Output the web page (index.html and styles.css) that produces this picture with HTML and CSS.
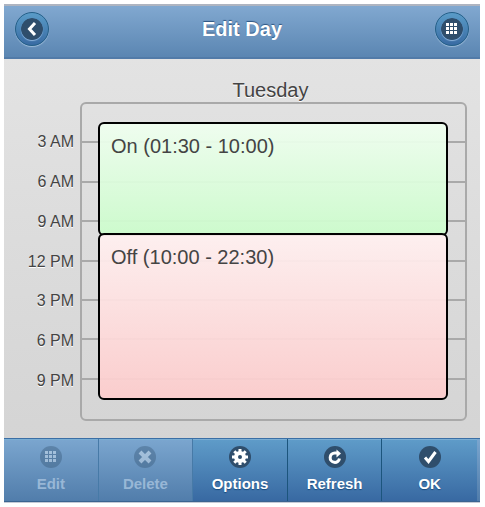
FILE: index.html
```html
<!DOCTYPE html>
<html lang="en">
<head>
<meta charset="utf-8">
<meta name="viewport" content="width=device-width, initial-scale=1">
<title>Edit Day</title>
<link rel="stylesheet" href="styles.css">
</head>
<body>
<div class="app">
  <header class="header">
    <button class="round-button" type="button" aria-label="Back">
      <svg class="icon" viewBox="0 0 22 22" aria-hidden="true"><circle class="disc" cx="11" cy="11" r="11"/><path class="stroke" d="M14 5 8.500 11l5.500 6"/></svg>
    </button>
    <h1 class="title">Edit Day</h1>
    <button class="round-button" type="button" aria-label="Menu">
      <svg class="icon" viewBox="0 0 22 22" aria-hidden="true"><circle class="disc" cx="11" cy="11" r="11"/><path class="fill" d="M5 5h3v3H5zM9 5h3v3H9zM13 5h3v3h-3zM5 9h3v3H5zM9 9h3v3H9zM13 9h3v3h-3zM5 13h3v3H5zM9 13h3v3H9zM13 13h3v3h-3z"/></svg>
    </button>
  </header>

  <main class="schedule">
    <h2 class="day">Tuesday</h2>
    <ol class="hours">
      <li>3 AM</li>
      <li>6 AM</li>
      <li>9 AM</li>
      <li>12 PM</li>
      <li>3 PM</li>
      <li>6 PM</li>
      <li>9 PM</li>
    </ol>
    <div class="timeline">
      <div class="lines" aria-hidden="true">
        <i></i><i></i><i></i><i></i><i></i><i></i><i></i><i></i>
      </div>
      <div class="event on" style="top: 6.25%; bottom: 58.333%">On (01:30 - 10:00)</div>
      <div class="event off" style="top: 41.667%; bottom: 6.25%">Off (10:00 - 22:30)</div>
    </div>
  </main>

  <footer class="toolbar">
    <button class="tool" type="button" disabled>
      <svg class="icon" viewBox="0 0 22 22" aria-hidden="true"><circle class="disc" cx="11" cy="11" r="11"/><path class="fill" d="M5 5h3v3H5zM9 5h3v3H9zM13 5h3v3h-3zM5 9h3v3H5zM9 9h3v3H9zM13 9h3v3h-3zM5 13h3v3H5zM9 13h3v3H9zM13 13h3v3h-3z"/></svg>
      Edit
    </button>
    <button class="tool" type="button" disabled>
      <svg class="icon" viewBox="0 0 22 22" aria-hidden="true"><circle class="disc" cx="11" cy="11" r="11"/><path class="stroke thick" d="m6 6 10 10M16 6 6 16"/></svg>
      Delete
    </button>
    <button class="tool" type="button">
      <svg class="icon" viewBox="0 0 22 22" aria-hidden="true"><circle class="disc" cx="11" cy="11" r="11"/><path class="stroke" d="M11 3v16M3 11h16M5.300 5.300l11.400 11.400M16.700 5.300 5.300 16.700"/><circle class="fill" cx="11" cy="11" r="6"/><circle class="disc" cx="11" cy="11" r="2"/></svg>
      Options
    </button>
    <button class="tool" type="button">
      <svg class="icon" viewBox="0 0 22 22" aria-hidden="true"><circle class="disc" cx="11" cy="11" r="11"/><path class="stroke" d="M15.500 12.500A4.700 4.700 0 1 1 11 7h3"/><path class="fill" d="M12.500 3.500 17 7.500l-4.500 4z"/></svg>
      Refresh
    </button>
    <button class="tool" type="button">
      <svg class="icon" viewBox="0 0 22 22" aria-hidden="true"><circle class="disc" cx="11" cy="11" r="11"/><path class="stroke" d="m6 11.500 3.500 4L16.500 6"/></svg>
      OK
    </button>
  </footer>
</div>
</body>
</html>
```
FILE: styles.css
```css
* {
  box-sizing: border-box;
}

body {
  margin: 0;
  padding: 4px 5px 4px 4px;
  background: #fff;
  font-family: "Liberation Sans", Arial, sans-serif;
  color: #444;
}

.app {
  display: flex;
  flex-direction: column;
  min-height: calc(100vh - 8px);
  border-bottom: 1px solid #c4cad6;
  background: linear-gradient(#e5e5e5, #d2d2d2);
}

.header {
  display: flex;
  align-items: center;
  justify-content: space-between;
  height: 55px;
  padding: 0 11px 6px;
  border-top: 2px solid #aeb4c0;
  border-bottom: 2px solid #527ba8;
  background: linear-gradient(#81a8d0, #5b86b2);
}

.title {
  margin: 0;
  font-size: 20px;
  line-height: 24px;
  color: #fff;
  text-shadow: 0 -1px 1px #2c5480;
}

.round-button {
  display: flex;
  align-items: center;
  justify-content: center;
  width: 34px;
  height: 34px;
  padding: 0;
  border: 1px solid #245f88;
  border-radius: 50%;
  background: linear-gradient(#5a9cc8, #396ba3);
  box-shadow: 0 1px 1px #9dbbd8;
}

.icon {
  display: block;
  width: 22px;
  height: 22px;
}

.round-button .icon {
  border-radius: 50%;
  box-shadow: 0 1px 1px #8fb4dc;
}

.disc {
  fill: #2f4e6c;
}

.fill {
  fill: #fff;
}

.stroke {
  fill: none;
  stroke: #fff;
  stroke-width: 3;
}

.thick {
  stroke-width: 4;
}

.schedule {
  flex: 1;
  display: grid;
  grid-template-columns: 76px 1fr;
  grid-template-rows: 24px 1fr;
  padding: 19px 13px 17px 0;
}

.day {
  grid-column: 2;
  margin: 0;
  padding-right: 6px;
  font-size: 20px;
  font-weight: normal;
  line-height: 24px;
  text-align: center;
  text-shadow: 0 1px 0 #fff;
}

.hours {
  display: grid;
  grid-template-rows: 1fr repeat(7, 2fr) 1fr;
  align-items: center;
  margin: 0;
  padding: 0 6px 0 0;
  list-style: none;
  font-size: 16px;
  line-height: 20px;
  text-align: right;
  text-shadow: 0 1px 0 #fff;
}

.hours::before {
  content: "";
}

.timeline {
  position: relative;
  display: grid;
  border: 2px solid #a9a9a9;
  border-radius: 6px;
}

.lines {
  display: grid;
  grid-template-rows: repeat(8, 1fr);
}

.lines i {
  border-bottom: 2px solid #a9a9a9;
}

.lines i:last-child {
  border-bottom: 0;
}

.event {
  position: absolute;
  left: 16px;
  right: 17px;
  margin: -2px 0 -1px;
  padding: 10px 11px;
  border: 2px solid #000;
  border-radius: 6px;
  background-clip: padding-box;
  font-size: 20px;
  line-height: 24px;
}

.on {
  background-image: linear-gradient(rgba(240, 255, 240, 0.94), rgba(204, 252, 204, 0.94));
}

.off {
  background-image: linear-gradient(rgba(255, 240, 240, 0.94), rgba(252, 204, 204, 0.94));
}

.toolbar {
  display: grid;
  grid-template-columns: repeat(5, 1fr);
  height: 64px;
  padding-right: 3px;
  border-top: 1px solid #3b6fa5;
  border-bottom: 1px solid #3b6490;
  background: linear-gradient(#7ba6cf, #517dab);
}

.tool {
  display: flex;
  flex-direction: column;
  align-items: center;
  gap: 7px;
  min-width: 0;
  padding: 7px 0 0;
  border: 0;
  border-right: 1px solid #1c557d;
  background: linear-gradient(#5f9cc9, #3869a2);
  box-shadow: inset 0 1px 0 #7baed4;
  color: #fff;
  font: bold 15px/18px "Liberation Sans", Arial, sans-serif;
  text-shadow: 0 1px 1px #194b7e;
}

.tool:last-child {
  border-right: 0;
}

.tool:disabled {
  border-right-color: #477aa7;
  background: none;
  color: #98b7d6;
  text-shadow: none;
}

.tool:disabled .icon {
  opacity: 0.35;
}
```
